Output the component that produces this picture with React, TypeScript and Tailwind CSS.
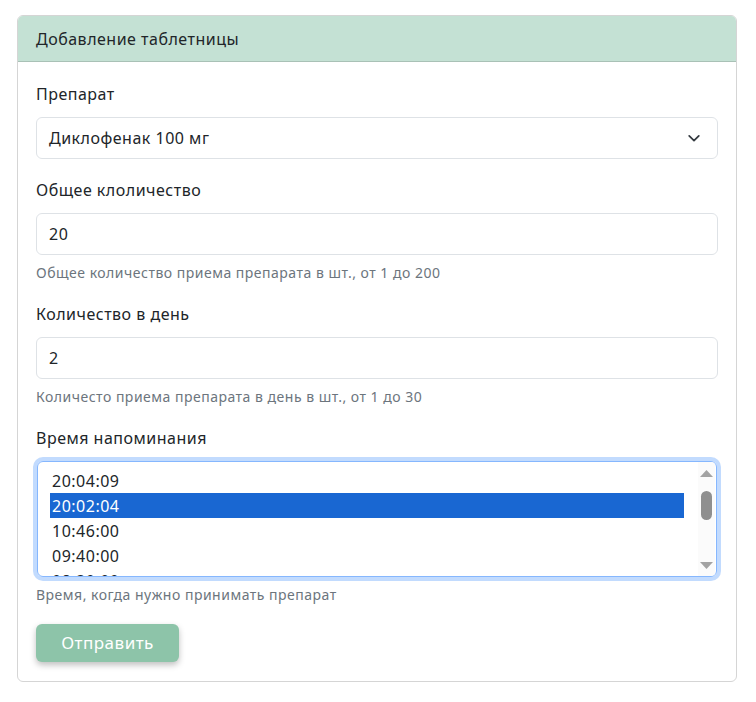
import React from "react";

const font = { fontFamily: '"Noto Sans", "Open Sans", sans-serif' };

const times = ["20:04:09", "20:02:04", "10:46:00", "09:40:00", "08:30:00"];

const Field: React.FC<{ label: string; help?: string; children: React.ReactNode }> = ({ label, help, children }) => (
  <div className="flex flex-col">
    <label className="pt-[1px] text-[16px] leading-[24px] text-[#212529] mb-[11px]">{label}</label>
    {children}
    {help && <div className="mt-[7px] text-[14px] leading-[21px] text-[#6c757d]">{help}</div>}
  </div>
);

const TextBox: React.FC<{ value: string }> = ({ value }) => (
  <div className="h-[42px] border border-[#dee2e6] rounded-[6px] px-[12px] flex items-center text-[16px] text-[#212529]">
    {value}
  </div>
);

export default function App() {
  return (
    <div className="min-h-screen bg-white pt-[15px] pl-[17px] tracking-[0.5px]" style={font}>
      <div className="w-[720px] border border-[#d5d5d5] rounded-[6px] overflow-hidden">
        {/* шапка */}
        <div className="bg-[#c4e1d4] border-b border-[#a9c1b6] px-[18px] pt-[11px] pb-[10px] text-[16px] leading-[24px] text-[#212529]">
          Добавление таблетницы
        </div>

        <div className="px-[18px] pt-[19px] pb-[19px] flex flex-col gap-[18px]">
          <Field label="Препарат">
            <div className="h-[42px] border border-[#dee2e6] rounded-[6px] pl-[12px] pr-[16px] flex items-center justify-between text-[16px] text-[#212529]">
              <span>Диклофенак 100 мг</span>
              <svg width="14" height="14" viewBox="0 0 16 16" fill="none">
                <path d="M2.5 5.5L8 11l5.5-5.5" stroke="#343a40" strokeWidth="2" strokeLinecap="round" strokeLinejoin="round" />
              </svg>
            </div>
          </Field>

          <Field label="Общее клоличество" help="Общее количество приема препарата в шт., от 1 до 200">
            <TextBox value="20" />
          </Field>

          <Field label="Количество в день" help="Количесто приема препарата в день в шт., от 1 до 30">
            <TextBox value="2" />
          </Field>

          <Field label="Время напоминания" help="Время, когда нужно принимать препарат">
            <div className="h-[116px] mx-[1px] border border-[#86b7fe] rounded-[6px] shadow-[0_0_0_4px_rgba(13,110,253,0.25)] flex overflow-hidden">
              <div className="flex-1 pl-[12px] pr-[14px] pt-[6px] overflow-hidden">
                {times.map((t, i) => (
                  <div
                    key={t}
                    className={
                      "h-[25px] leading-[26px] px-[2px] text-[16px] " +
                      (i === 1 ? "bg-[#1967d2] text-white" : "text-[#212529]")
                    }
                  >
                    {t}
                  </div>
                ))}
              </div>
              {/* полоса прокрутки */}
              <div className="w-[17px] mr-[1px] bg-[#fbfbfb] flex flex-col items-center pt-[8px] pb-[7px]">
                <svg width="13" height="7" viewBox="0 0 13 7">
                  <path d="M6.5 0L13 7H0z" fill="#a3a3a3" />
                </svg>
                <div className="w-[11px] h-[29px] mt-[14px] rounded-full bg-[#8f8f8f]" />
                <div className="flex-1" />
                <svg width="13" height="7" viewBox="0 0 13 7">
                  <path d="M0 0h13L6.5 7z" fill="#a3a3a3" />
                </svg>
              </div>
            </div>
          </Field>

          <div className="mt-[1px]">
            <button className="w-[143px] h-[38px] rounded-[6px] bg-[#8dc4a9] text-white text-[17px] shadow-[0_3px_6px_rgba(0,0,0,0.25)]">
              Отправить
            </button>
          </div>
        </div>
      </div>
    </div>
  );
}
